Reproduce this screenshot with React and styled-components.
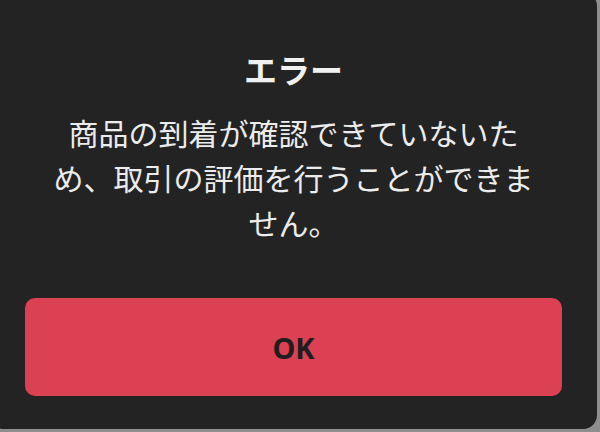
import React from 'react';
import styled, { createGlobalStyle } from 'styled-components';

const GlobalStyle = createGlobalStyle`
  html, body {
    margin: 0;
    padding: 0;
    background: #8e8e8e;
    overflow: hidden;
  }
  body {
    font-family: "Noto Sans CJK JP", "Noto Sans", sans-serif;
  }
`;

const Page = styled.div`
  width: 600px;
  height: 432px;
  overflow: hidden;
`;

const Dialog = styled.div`
  box-sizing: border-box;
  margin: -8px 0 0 -10px;
  width: 607px;
  height: 437px;
  padding: 57px 35px 33px;
  background: #232323;
  border-radius: 14px;
  display: flex;
  flex-direction: column;
  align-items: center;
`;

const Title = styled.h1`
  margin: 0;
  font-size: 33px;
  line-height: 40px;
  font-weight: 700;
  color: #f0f0f0;
`;

const Message = styled.p`
  margin: 21px 0 0;
  width: 495px;
  font-size: 30px;
  line-height: 45px;
  font-weight: 400;
  color: #ececec;
  text-align: center;
`;

const OkButton = styled.button`
  margin-top: auto;
  width: 100%;
  height: 98px;
  border: none;
  border-radius: 10px;
  background: #db4053;
  color: #1e1e1e;
  font-family: "Noto Sans", "Noto Sans CJK JP", sans-serif;
  font-size: 29px;
  font-weight: 700;
  cursor: pointer;
`;

export default function App() {
  return (
    <Page>
      <GlobalStyle />
      <Dialog>
        <Title>エラー</Title>
        <Message>商品の到着が確認できていないため、取引の評価を行うことができません。</Message>
        <OkButton type="button">OK</OkButton>
      </Dialog>
    </Page>
  );
}
